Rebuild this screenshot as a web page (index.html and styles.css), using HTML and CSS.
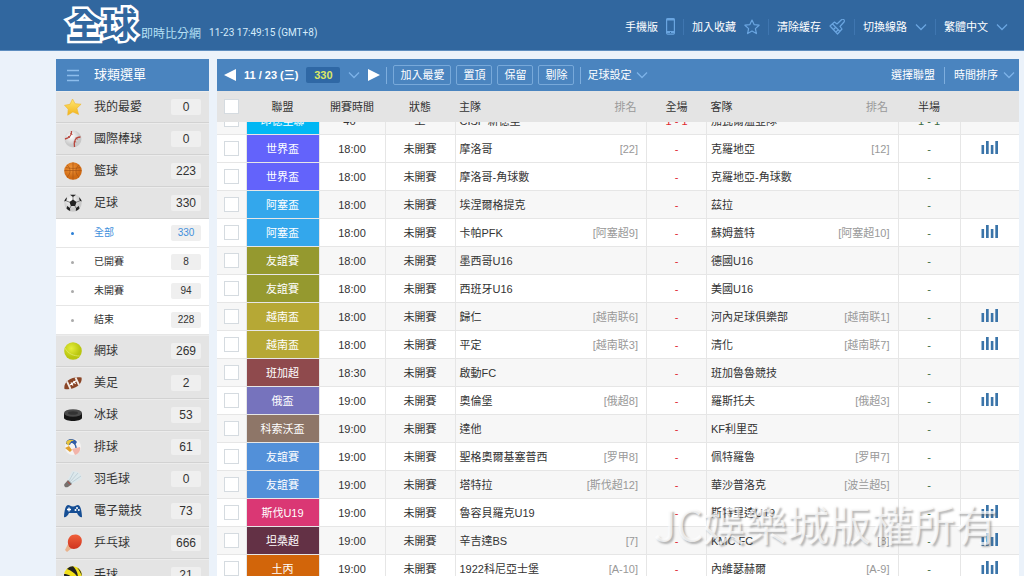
FILE: index.html
```html
<!DOCTYPE html>
<html lang="zh-Hant">
<head>
<meta charset="utf-8">
<meta name="viewport" content="width=device-width, initial-scale=1">
<title>全球即時比分網</title>
<link rel="stylesheet" href="styles.css">
</head>
<body>
<svg class="defs" aria-hidden="true">
  <defs>
    <symbol id="chevron" viewBox="0 0 12 8"><path d="M1 1.500 6 6.500 11 1.500" fill="none" stroke="currentColor" stroke-width="1.300"/></symbol>
    <symbol id="bars" viewBox="0 0 18 14"><path d="M.5 4h2.600v9H.5zM5 0h2.700v13H5zM9.800 4h2.600v9H9.800zM14.300 0H17v13h-2.700z" fill="#3a74a9"/></symbol>
    <radialGradient id="g-orange" cx=".4" cy=".35"><stop offset="0" stop-color="#f59a3c"/><stop offset="1" stop-color="#cf6a14"/></radialGradient>
    <radialGradient id="g-white" cx=".4" cy=".35"><stop offset="0" stop-color="#fff"/><stop offset="1" stop-color="#c9c9c9"/></radialGradient>
    <radialGradient id="g-lime" cx=".4" cy=".35"><stop offset="0" stop-color="#e6ee3a"/><stop offset="1" stop-color="#b9c610"/></radialGradient>
    <linearGradient id="g-gold" x2="0" y2="1"><stop offset="0" stop-color="#ffe871"/><stop offset="1" stop-color="#f2b31c"/></linearGradient>
    <linearGradient id="g-red" x2="0" y2="1"><stop offset="0" stop-color="#f0603a"/><stop offset="1" stop-color="#cf3420"/></linearGradient>
  </defs>
</svg>

<div class="app">
  <header class="topbar">
    <div class="brand">
      <h1 class="logo">全球</h1>
      <span class="tagline">即時比分網</span>
      <time class="clock">11-23 17:49:15 (GMT+8)</time>
    </div>
    <nav class="topnav">
      <a href="#">手機版
        <svg width="9" height="17" viewBox="0 0 9 17"><rect x=".6" y=".6" width="7.800" height="15.600" rx="1.200" fill="none" stroke="#6aa5e0" stroke-width="1.200"/><path d="M.5 1.500h8M.5 14h8" stroke="#6aa5e0" stroke-width="2"/><path d="M4 14.500h1" stroke="#31679f"/></svg></a>
      <a href="#">加入收藏
        <svg width="16" height="16" viewBox="0 0 16 16"><path d="M8 1l2.100 4.600 5 .6-3.700 3.400 1 5L8 12.100l-4.400 2.500 1-5L.9 6.200l5-.6z" fill="none" stroke="#6aa5e0" stroke-width="1.200" stroke-linejoin="round"/></svg></a>
      <a href="#">清除緩存
        <svg width="17" height="16" viewBox="0 0 17 16"><g fill="none" stroke="#6aa5e0" stroke-width="1.200" stroke-linejoin="round"><path d="M1 7l4.500-4 2.500 2L12.500.8a1.600 1.600 0 0 1 2.500 2.200L11 7.500l2 2.500-4.500 5zM3.500 5l7.500 7.500M4.500 10.500l2-2M7 13l2-2"/></g></svg></a>
      <button type="button">切換線路 <svg class="chev" width="12" height="8"><use href="#chevron"/></svg></button>
      <button type="button">繁體中文 <svg class="chev" width="12" height="8"><use href="#chevron"/></svg></button>
    </nav>
  </header>

  <div class="layout">
    <aside class="sidebar">
      <h2 class="side-title"><svg width="18" height="13" viewBox="0 0 18 13"><path d="M3 1.500h12M3 6.500h12M3 11.500h12" stroke="#8dbdec" stroke-width="1.500"/></svg>球類選單</h2>
      <ul class="menu">
        <li><a href="#"><svg width="18" height="18" viewBox="0 0 18 18"><path d="M8.500 1l2.600 4.700 6 .5-4.200 4 1.700 6.300-5.700-2.600-5.200 3.300.5-6L.5 7.300l5.500-1z" fill="url(#g-gold)" stroke="#eeb62c" stroke-width=".6"/></svg>我的最愛<b>0</b></a></li>
        <li><a href="#"><svg width="18" height="18" viewBox="0 0 18 18"><circle cx="9" cy="9" r="8.500" fill="url(#g-white)"/><path d="M7.500 1C8 5 5 8 1 9M16.500 7c-5 0-7 4-6 10" fill="none" stroke="#b8453c" stroke-width="1.300"/><path d="M6 3.500l2.500 1M4 6l2 2M12 7.500l1.500 2M9.800 11.500l2.500.5" stroke="#b8453c" stroke-width=".8"/></svg>國際棒球<b>0</b></a></li>
        <li><a href="#"><svg width="18" height="18" viewBox="0 0 18 18"><circle cx="9" cy="9" r="8.800" fill="url(#g-orange)"/><path d="M9 .5v17M.5 8.500h17M3 3c4 3 4 9 0 12M15 3c-4 3-4 9 0 12M2 5.500c4 1.200 10 1.200 14 0" fill="none" stroke="#a85514" stroke-width=".7"/></svg>籃球<b>223</b></a></li>
        <li><a href="#"><svg width="18" height="18" viewBox="0 0 18 18"><circle cx="9" cy="9" r="8.700" fill="url(#g-white)"/><g fill="#222"><path d="M9 5.500l3.500 2.600-1.300 4H6.800l-1.300-4z"/><path d="M6 .8h6L9 3zM17.700 7.500l-2-.7-.7-3.500c1.500 1.200 2.400 2.500 2.700 4.200zM.3 7.500l2-.7L3 3.300C1.500 4.500.6 5.800.3 7.500zM2.500 14.500l.7-2.500 2.800 2 .2 3c-1.500-.5-2.700-1.200-3.700-2.500zM15.500 14.500l-.7-2.500-2.800 2-.2 3c1.500-.5 2.700-1.200 3.700-2.500z"/></g><path d="M9 3v3M2.300 7l3.500 1.200M15.700 7l-3.500 1.200M6 14l1-2M12 14l-1-2" stroke="#555" stroke-width=".7"/></svg>足球<b>330</b></a>
          <ul class="submenu">
            <li><a class="current" href="#">全部<b>330</b></a></li>
            <li><a href="#">已開賽<b>8</b></a></li>
            <li><a href="#">未開賽<b>94</b></a></li>
            <li><a href="#">結束<b>228</b></a></li>
          </ul></li>
        <li><a href="#"><svg width="18" height="18" viewBox="0 0 18 18"><circle cx="9" cy="9" r="8.800" fill="url(#g-lime)"/><path d="M1 6c3 6 9 8 14.500 8" fill="none" stroke="#dfe86a" stroke-width=".8"/></svg>網球<b>269</b></a></li>
        <li><a href="#"><svg width="18" height="18" viewBox="0 0 18 18"><path d="M.5 15C-1 8 7 2 17.500 3.500 19 10 11 16.500.5 15z" fill="#8a4526"/><path d="M3 7.500l3.500 7.500M11.500 3.500l3.500 7.500" stroke="#f4ece6" stroke-width="1.800"/><path d="M6 11l6.500-4.500M7 8.500l2 3M9.500 7l2 3" stroke="#fff" stroke-width="1.200"/></svg>美足<b>2</b></a></li>
        <li><a href="#"><svg width="18" height="18" viewBox="0 0 18 18"><path d="M0 7v5c1 4 17 4 18 0V7z" fill="#161616"/><ellipse cx="9" cy="7" rx="9" ry="3.800" fill="#4b4b4b"/><ellipse cx="9" cy="7" rx="5" ry="1.800" fill="#333"/></svg>冰球<b>53</b></a></li>
        <li><a href="#"><svg width="18" height="18" viewBox="0 0 18 18"><circle cx="9" cy="9" r="8" fill="#f5f3f2"/><path d="M2 6c0-5 7-7 11-2l-2 3C9 4 7 4 6 7z" fill="#315da5"/><path d="M2 5c1-4 6-4 8-2-3 0-5 2-5 5z" fill="#e8c43c"/><path d="M1 10l4-2 3 4-2 2z" fill="#e2a02c"/><path d="M8 11l8-2c1 4-2 7-5 8z" fill="#f2b4aa"/><path d="M7 4c3 0 5 3 5 6" fill="none" stroke="#315da5" stroke-width="1.300"/></svg>排球<b>61</b></a></li>
        <li><a href="#"><svg width="18" height="18" viewBox="0 0 18 18"><path d="M3.500 10L8 1.500C13 .5 18 4 17.500 9L8 14z" fill="#dce8ec"/><path d="M5 11l5-9M6 12l8-9M7 13l10-7" stroke="#b6c6ce" stroke-width=".7"/><path d="M4 10l4 4-4 3c-3 1-4.500-1-3.500-3z" fill="#77716e"/><path d="M3.500 11.500l3 3" stroke="#b84b42"/></svg>羽毛球<b>0</b></a></li>
        <li><a href="#"><svg width="18" height="18" viewBox="0 0 18 18"><path d="M4 3c2 0 2.500 1.500 5 1.500S12 3 14 3c3 0 4 9 4 12-2 1-4-2-5-4H5c-1 2-3 5-5 4 0-3 1-12 4-12z" fill="#164e94"/><path d="M5 5.500v4M3 7.500h4" stroke="#fff" stroke-width="1.300"/><circle cx="13" cy="6" r="1" fill="#fff"/><circle cx="11.500" cy="8" r="1" fill="#fff"/><circle cx="14.800" cy="8" r="1" fill="#fff"/></svg>電子競技<b>73</b></a></li>
        <li><a href="#"><svg width="18" height="18" viewBox="0 0 18 18"><path d="M4 10l4 4-5 4-2-2z" fill="#e9b28c"/><path d="M5 12.500C2 7 5 0 12 .5c6 .5 8 8 3 12.500-3 2.500-6 2-8 1.500z" fill="url(#g-red)"/></svg>乒乓球<b>666</b></a></li>
        <li><a href="#"><svg width="18" height="18" viewBox="0 0 18 18"><circle cx="9" cy="9" r="8.800" fill="#f2e01c"/><path d="M3 3c2-2 4-2.700 6-2.700C12 3 14 7 14 12c-2-4-6-7-11-9zM0 8c4 0 8 2 10 7l-2 3C3 17 0 13 0 8zM13 1.500c3 2 5 5 4.800 9C17 7 15 4 13 1.500z" fill="#222"/></svg>手球<b>21</b></a></li>
      </ul>
    </aside>

    <main class="board">
      <div class="toolbar">
        <button type="button" class="arrow" aria-label="前一天"><svg width="12" height="12" viewBox="0 0 12 12"><path d="M12 0v12L0 6z" fill="#fff"/></svg></button>
        <button type="button" class="date">11 / 23 (三)<span class="total">330</span><svg class="chev" width="12" height="8"><use href="#chevron"/></svg></button>
        <button type="button" class="arrow next" aria-label="後一天"><svg width="12" height="12" viewBox="0 0 12 12"><path d="M0 0v12l12-6z" fill="#fff"/></svg></button>
        <span class="rule"></span>
        <button type="button" class="act">加入最愛</button>
        <button type="button" class="act">置頂</button>
        <button type="button" class="act">保留</button>
        <button type="button" class="act">剔除</button>
        <span class="rule"></span>
        <button type="button" class="drop">足球設定<svg class="chev" width="12" height="8"><use href="#chevron"/></svg></button>
        <button type="button" class="drop push">選擇聯盟</button>
        <span class="rule wide"></span>
        <button type="button" class="drop">時間排序<svg class="chev" width="12" height="8"><use href="#chevron"/></svg></button>
      </div>

      <table class="grid head">
        <colgroup><col class="c-pick"><col class="c-league"><col class="c-time"><col class="c-state"><col><col class="c-full"><col><col class="c-half"><col class="c-data"></colgroup>
        <thead><tr><th><input type="checkbox" aria-label="全選"></th><th>聯盟</th><th>開賽時間</th><th>狀態</th><th class="team"><div>主隊<i>排名</i></div></th><th>全場</th><th class="team"><div>客隊<i>排名</i></div></th><th>半場</th><th></th></tr></thead>
      </table>

      <div class="scroller">
      <table class="grid body">
        <colgroup><col class="c-pick"><col class="c-league"><col class="c-time"><col class="c-state"><col><col class="c-full"><col><col class="c-half"><col class="c-data"></colgroup>
        <tbody>
          <tr class="alt"><td><input type="checkbox" aria-label="CISF 新德里"></td><td class="league sky">印德里聯</td><td>46 <span class="tick">'</span></td><td>上</td><td class="team"><div>CISF 新德里</div></td><td class="full">1 - 1</td><td class="team"><div>加瓦爾溫亞隊</div></td><td class="half">1 - 1</td><td></td></tr>
          <tr><td><input type="checkbox" aria-label="摩洛哥"></td><td class="league violet">世界盃</td><td>18:00</td><td>未開賽</td><td class="team"><div>摩洛哥<i>[22]</i></div></td><td class="full">-</td><td class="team"><div>克羅地亞<i>[12]</i></div></td><td class="half">-</td><td><a href="#" aria-label="數據"><svg width="18" height="14"><use href="#bars"/></svg></a></td></tr>
          <tr><td><input type="checkbox" aria-label="摩洛哥-角球數"></td><td class="league violet">世界盃</td><td>18:00</td><td>未開賽</td><td class="team"><div>摩洛哥-角球數</div></td><td class="full">-</td><td class="team"><div>克羅地亞-角球數</div></td><td class="half">-</td><td></td></tr>
          <tr class="alt"><td><input type="checkbox" aria-label="埃涅爾格提克"></td><td class="league azure">阿塞盃</td><td>18:00</td><td>未開賽</td><td class="team"><div>埃涅爾格提克</div></td><td class="full">-</td><td class="team"><div>茲拉</div></td><td class="half">-</td><td></td></tr>
          <tr><td><input type="checkbox" aria-label="卡帕PFK"></td><td class="league azure">阿塞盃</td><td>18:00</td><td>未開賽</td><td class="team"><div>卡帕PFK<i>[阿塞超9]</i></div></td><td class="full">-</td><td class="team"><div>蘇姆蓋特<i>[阿塞超10]</i></div></td><td class="half">-</td><td><a href="#" aria-label="數據"><svg width="18" height="14"><use href="#bars"/></svg></a></td></tr>
          <tr class="alt"><td><input type="checkbox" aria-label="墨西哥U16"></td><td class="league olive">友誼賽</td><td>18:00</td><td>未開賽</td><td class="team"><div>墨西哥U16</div></td><td class="full">-</td><td class="team"><div>德國U16</div></td><td class="half">-</td><td></td></tr>
          <tr><td><input type="checkbox" aria-label="西班牙U16"></td><td class="league olive">友誼賽</td><td>18:00</td><td>未開賽</td><td class="team"><div>西班牙U16</div></td><td class="full">-</td><td class="team"><div>美國U16</div></td><td class="half">-</td><td></td></tr>
          <tr class="alt"><td><input type="checkbox" aria-label="歸仁"></td><td class="league mustard">越南盃</td><td>18:00</td><td>未開賽</td><td class="team"><div>歸仁<i>[越南联6]</i></div></td><td class="full">-</td><td class="team"><div>河內足球俱樂部<i>[越南联1]</i></div></td><td class="half">-</td><td><a href="#" aria-label="數據"><svg width="18" height="14"><use href="#bars"/></svg></a></td></tr>
          <tr><td><input type="checkbox" aria-label="平定"></td><td class="league mustard">越南盃</td><td>18:00</td><td>未開賽</td><td class="team"><div>平定<i>[越南联3]</i></div></td><td class="full">-</td><td class="team"><div>清化<i>[越南联7]</i></div></td><td class="half">-</td><td><a href="#" aria-label="數據"><svg width="18" height="14"><use href="#bars"/></svg></a></td></tr>
          <tr class="alt"><td><input type="checkbox" aria-label="啟動FC"></td><td class="league brick">班加超</td><td>18:30</td><td>未開賽</td><td class="team"><div>啟動FC</div></td><td class="full">-</td><td class="team"><div>班加魯魯競技</div></td><td class="half">-</td><td></td></tr>
          <tr><td><input type="checkbox" aria-label="奧倫堡"></td><td class="league iris">俄盃</td><td>19:00</td><td>未開賽</td><td class="team"><div>奧倫堡<i>[俄超8]</i></div></td><td class="full">-</td><td class="team"><div>羅斯托夫<i>[俄超3]</i></div></td><td class="half">-</td><td><a href="#" aria-label="數據"><svg width="18" height="14"><use href="#bars"/></svg></a></td></tr>
          <tr class="alt"><td><input type="checkbox" aria-label="達他"></td><td class="league taupe">科索沃盃</td><td>19:00</td><td>未開賽</td><td class="team"><div>達他</div></td><td class="full">-</td><td class="team"><div>KF利里亞</div></td><td class="half">-</td><td></td></tr>
          <tr><td><input type="checkbox" aria-label="聖格奧爾基塞普西"></td><td class="league blue">友誼賽</td><td>19:00</td><td>未開賽</td><td class="team"><div>聖格奧爾基塞普西<i>[罗甲8]</i></div></td><td class="full">-</td><td class="team"><div>佩特羅魯<i>[罗甲7]</i></div></td><td class="half">-</td><td></td></tr>
          <tr class="alt"><td><input type="checkbox" aria-label="塔特拉"></td><td class="league blue">友誼賽</td><td>19:00</td><td>未開賽</td><td class="team"><div>塔特拉<i>[斯伐超12]</i></div></td><td class="full">-</td><td class="team"><div>華沙普洛克<i>[波兰超5]</i></div></td><td class="half">-</td><td></td></tr>
          <tr><td><input type="checkbox" aria-label="魯容貝羅克U19"></td><td class="league pink">斯伐U19</td><td>19:00</td><td>未開賽</td><td class="team"><div>魯容貝羅克U19</div></td><td class="full">-</td><td class="team"><div>斯特里達U19</div></td><td class="half">-</td><td><a href="#" aria-label="數據"><svg width="18" height="14"><use href="#bars"/></svg></a></td></tr>
          <tr class="alt"><td><input type="checkbox" aria-label="辛吉達BS"></td><td class="league plum">坦桑超</td><td>19:00</td><td>未開賽</td><td class="team"><div>辛吉達BS<i>[7]</i></div></td><td class="full">-</td><td class="team"><div>KMC FC<i>[8]</i></div></td><td class="half">-</td><td><a href="#" aria-label="數據"><svg width="18" height="14"><use href="#bars"/></svg></a></td></tr>
          <tr><td><input type="checkbox" aria-label="1922科尼亞士堡"></td><td class="league rust">土丙</td><td>19:00</td><td>未開賽</td><td class="team"><div>1922科尼亞士堡<i>[A-10]</i></div></td><td class="full">-</td><td class="team"><div>內維瑟赫爾<i>[A-9]</i></div></td><td class="half">-</td><td><a href="#" aria-label="數據"><svg width="18" height="14"><use href="#bars"/></svg></a></td></tr>
        </tbody>
      </table>
      </div>
    </main>
  </div>
  <div class="watermark">JC娛樂城版權所有</div>
</div>
</body>
</html>
```

FILE: styles.css
```css
* { box-sizing: border-box; }

body {
  margin: 0;
  background: #ebf2fa;
  color: #333;
  font: 11px/16px "Liberation Sans", "Noto Sans CJK TC", sans-serif;
}

button {
  border: 0;
  padding: 0;
  background: none;
  color: inherit;
  font: inherit;
  cursor: pointer;
}

a { color: inherit; text-decoration: none; }
ul { margin: 0; padding: 0; list-style: none; }
svg { display: block; flex: none; }
i { font-style: normal; }

.defs { position: absolute; width: 0; height: 0; }

.app {
  position: relative;
  height: 100vh;
  overflow: hidden;
}

/* Top bar */
.topbar {
  display: flex;
  justify-content: space-between;
  height: 51px;
  padding: 0 8px 0 67px;
  background: #31679f;
  border-bottom: 1px solid #5d8dbf;
  color: #fff;
}

.brand { display: flex; align-items: flex-start; }

.logo {
  margin: 0;
  color: #31679f;
  font: oblique 8deg bold 35px/46px "Noto Sans CJK TC", sans-serif;
  -webkit-text-stroke: 5px #fff;
  paint-order: stroke fill;
}

.tagline {
  padding: 26px 8px 0 4px;
  color: #b5e0f5;
  font-size: 12px;
}

.clock {
  padding-top: 25px;
  color: #d5ecfb;
  font-family: Roboto, "Liberation Sans", sans-serif;
  font-size: 10px;
}

.topnav { display: flex; align-items: center; padding-top: 3px; }

.topnav > * {
  display: flex;
  align-items: center;
  gap: 8px;
  height: 16px;
  padding: 0 8px;
}

.topnav > * + * { border-left: 1px solid #3f76b0; }

.chev { color: #7db2e8; }
.topnav .chev { color: #6aa5e0; }

/* Page columns */
.layout {
  display: flex;
  gap: 8px;
  padding: 8px 5px 0 56px;
}

/* Sport menu */
.sidebar { flex: none; width: 153px; }

.side-title {
  display: flex;
  align-items: center;
  gap: 12px;
  height: 32px;
  margin: 0;
  padding: 0 8px;
  background: #4a84bf;
  color: #fff;
  font-size: 13px;
  font-weight: normal;
}

.menu a {
  display: flex;
  align-items: center;
  height: 32px;
  padding: 0 8px;
  background: #e4e4e4;
  border-bottom: 1px solid #d2d2d2;
  border-top: 1px solid #ececec;
  font-size: 12px;
}

.menu a svg { margin-right: 12px; }

.menu b {
  width: 30px;
  margin-left: auto;
  border-radius: 2px;
  background: #efefef;
  font-weight: normal;
  text-align: center;
}

.submenu a {
  height: 29px;
  background: #fff;
  border-top: 0;
  border-bottom-color: #e6e6e6;
  font-size: 10px;
}

.submenu a::before {
  content: "";
  width: 3px;
  height: 3px;
  margin: 0 20px 0 7px;
  border-radius: 50%;
  background: #aaa;
}

.submenu .current { color: #3f8fdc; }
.submenu .current::before { background: #2b7fd6; }

/* Toolbar */
.board { flex: 1; min-width: 0; }

.toolbar {
  display: flex;
  align-items: center;
  gap: 5px;
  height: 32px;
  padding: 0 4px 0 7px;
  background: #4a84bf;
  color: #fff;
}

.date {
  display: flex;
  align-items: center;
  gap: 8px;
  margin-left: 3px;
  font-weight: bold;
}

.total {
  width: 34px;
  border-radius: 2px;
  background: #2f68a5;
  color: #dbe765;
}

.next { margin-left: 3px; }

.rule { width: 1px; height: 17px; margin: 0 1px; background: #7eaede; }
.rule.wide { margin: 0 4px; }

.act {
  height: 20px;
  padding: 0 6px;
  border: 1px solid #78a9da;
  border-radius: 2px;
}

.drop { display: flex; align-items: center; gap: 5px; }
.push { margin-left: auto; }

/* Match tables */
.grid {
  width: 100%;
  border-collapse: collapse;
  table-layout: fixed;
}

.c-pick { width: 29px; }
.c-league { width: 73px; }
.c-time { width: 66px; }
.c-state { width: 70px; }
.c-full { width: 60px; }
.c-half { width: 62px; }
.c-data { width: 59px; }

.grid th, .grid td {
  padding: 0;
  font-weight: normal;
  text-align: center;
  vertical-align: middle;
}

.head th { height: 31px; background: #e4e4e4; }

.team div {
  display: flex;
  justify-content: space-between;
  padding: 0 8px 0 4px;
}

.head .team div { padding-right: 10px; }
.team i { color: #999; }

.scroller { overflow: hidden; }

/* The list is scrolled part-way through its first row. */
.body { margin-top: -16px; background: #fff; }

.body td {
  height: 28px;
  padding-top: 2px;
  border-bottom: 1px solid #e6e6e6;
  border-left: 1px solid #e6e6e6;
}

.body td:first-child { padding-top: 0; border-left: 0; }
.body td:last-child { padding: 0 0 2px; }
.alt { background: #f7f7f7; }
.tick { color: #2b7fd6; }
.body .full { color: #e02a30; }
.half { color: #3c6b45; }
.body a { display: inline-block; vertical-align: middle; }

input[type="checkbox"] {
  display: block;
  appearance: none;
  width: 15px;
  height: 15px;
  margin: 0 auto;
  border: 1px solid #d5dbe0;
  background: #fff;
}

.league { color: #fff; }
.sky { background: #00b7f4; }
.violet { background: #6363fb; }
.azure { background: #33a7ec; }
.olive { background: #95992f; }
.mustard { background: #b6a835; }
.brick { background: #8f4a4d; }
.iris { background: #7673bd; }
.taupe { background: #8e7668; }
.blue { background: #5290d9; }
.pink { background: #da3774; }
.plum { background: #633145; }
.rust { background: #d2650a; }

.watermark {
  position: absolute;
  right: 27px;
  bottom: 27px;
  color: rgba(255, 255, 255, .7);
  font: oblique 8deg 42px/52px "Noto Sans CJK TC", sans-serif;
  text-shadow: 2px 2px 2px rgba(100, 100, 100, .45);
  pointer-events: none;
}
```
